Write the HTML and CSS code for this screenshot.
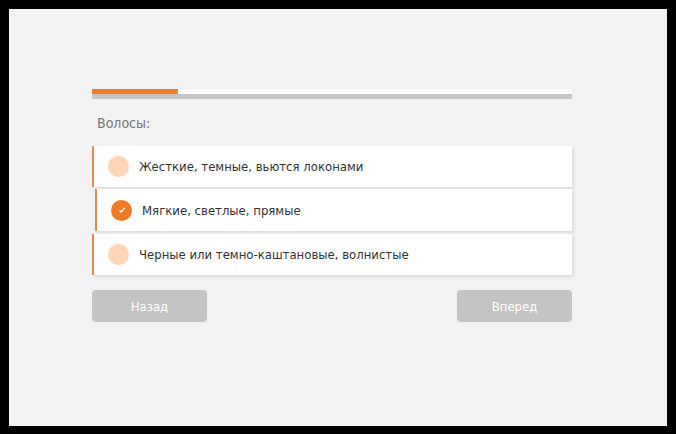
FILE: index.html
```html
<!DOCTYPE html>
<html lang="ru">
<head>
<meta charset="UTF-8" />
<title>Тест</title>
<link rel="stylesheet" href="styles.css">
</head>
<body>
<div class="frame">
  <div class="quiz">
    <div class="progress"><div class="progress-fill"></div></div>

    <div class="question">Волосы:</div>

    <ul class="answers">
      <li class="answer">
        <span class="radio"></span>
        <span class="label">Жесткие, темные, вьются локонами</span>
      </li>
      <li class="answer checked">
        <span class="radio">
          <svg width="8" height="8" viewBox="0 0 8 8"><path d="M1.5 4.2 L3.3 6 L6.5 2" fill="none" stroke="#fff" stroke-width="1.3"/></svg>
        </span>
        <span class="label">Мягкие, светлые, прямые</span>
      </li>
      <li class="answer">
        <span class="radio"></span>
        <span class="label">Черные или темно-каштановые, волнистые</span>
      </li>
    </ul>

    <div class="nav">
      <button class="navBtn">Назад</button>
      <button class="navBtn">Вперед</button>
    </div>
  </div>
</div>
</body>
</html>
```

FILE: styles.css
```css
/* ---------- reset ---------- */
*
{
  box-sizing:border-box;
  margin:0;
  padding:0;
}
body
{
  background:#000;
  width:676px;
  height:434px;
  padding:9px 9px 8px 9px;
  font-family:"DejaVu Sans Condensed","DejaVu Sans",sans-serif;
  overflow:hidden;
}
.frame
{
  background:#f2f2f2;
  height:100%;
  padding:80px 0 0 83px;
}
.quiz{width:480px;}

/* ===== progress ===== */
.progress
{
  height:10px;
  background:#fff;
  border-bottom:5px solid #c4c4c4;
}
.progress-fill
{
  width:86px;
  height:5px;
  background:#f07f2a;
}

/* ===== question ===== */
.question
{
  padding:16px 0 0 5px;
  height:47px;
  font-size:14px;
  color:#777;
}

/* ===== answers ===== */
.answers
{
  list-style:none;
  display:flex;
  flex-direction:column;
  gap:3px;
}
.answer
{
  display:flex;
  align-items:center;
  gap:10px;
  height:41px;
  padding-left:14px;
  background:#fff;
  border-left:2px solid #e7884a;
  box-shadow:2px 2px 3px rgba(0,0,0,.09);
  font-size:13px;
  color:#333;
}
.answer.checked
{
  margin-left:3px;
  height:42px;
  margin-top:-1px;
}
.radio
{
  width:21px;
  height:21px;
  border-radius:50%;
  background:#fdd4b4;
  display:flex;
  align-items:center;
  justify-content:center;
  flex:none;
}
.checked .radio{background:#f07a26;}
.radio svg{display:block;}

/* ===== nav ===== */
.nav
{
  display:flex;
  justify-content:space-between;
  margin-top:15px;
}
.navBtn
{
  width:115px;
  height:32px;
  border:none;
  border-radius:4px;
  background:#c4c4c4;
  color:#fff;
  font-family:inherit;
  font-size:13px;
}
```
